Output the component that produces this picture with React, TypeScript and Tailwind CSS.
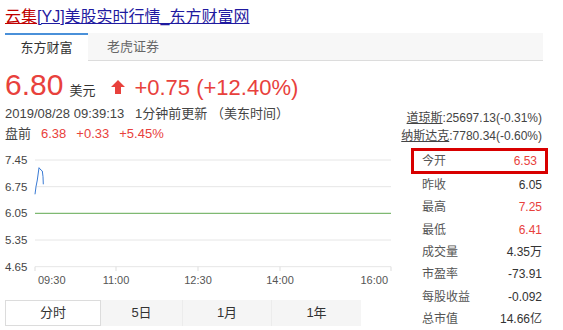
const red = "text-[#e8413c]";

const stats = [
  { label: "昨收", value: "6.05", up: false },
  { label: "最高", value: "7.25", up: true },
  { label: "最低", value: "6.41", up: true },
  { label: "成交量", value: "4.35万", up: false },
  { label: "市盈率", value: "-73.91", up: false },
  { label: "每股收益", value: "-0.092", up: false },
  { label: "总市值", value: "14.66亿", up: false },
];

const gridY = [10, 36.7, 63.3, 90, 116.7];
const yLabels = ["7.45", "6.75", "6.05", "5.35", "4.65"];
const times = [
  { t: "09:30", x: 38, anchor: "start" },
  { t: "11:00", x: 116, anchor: "middle" },
  { t: "12:30", x: 198, anchor: "middle" },
  { t: "14:00", x: 280, anchor: "middle" },
  { t: "16:00", x: 388, anchor: "end" },
];

const Chart = () => (
  <svg width="395" height="142" className="block" style={{ fontFamily: "'Liberation Sans', Arial, sans-serif" }}>
    {gridY.map((y, i) => (
      <g key={i}>
        <text x="5" y={y + 4} fontSize="11.5" fill="#444">
          {yLabels[i]}
        </text>
        {i !== 2 && <line x1="35" x2="391" y1={y} y2={y} stroke="#e6e6e6" strokeWidth="1" />}
      </g>
    ))}
    <line x1="35" x2="391" y1={63.3} y2={63.3} stroke="#5fa84f" strokeWidth="1" />
    {[35, 116, 198, 280, 391].map((x) => (
      <line key={x} x1={x} x2={x} y1={116.7} y2={121} stroke="#ddd" />
    ))}
    {times.map((t) => (
      <text key={t.t} x={t.x} y="134" fontSize="11" fill="#555" textAnchor={t.anchor as "start" | "middle" | "end"}>
        {t.t}
      </text>
    ))}
    <polyline
      points="35,44.3 36,36.7 37.3,30 39,17.7 40,19 41,20 42.3,21 43,26.7 43.3,34.3"
      fill="none"
      stroke="#3a7bd5"
      strokeWidth="1"
    />
  </svg>
);

export default function App() {
  return (
    <div
      className="w-[563px] h-[330px] bg-white overflow-hidden text-[#333]"
      style={{ fontFamily: "'Liberation Sans', Arial, 'Noto Sans CJK SC', sans-serif" }}
    >
      <div className="pl-[5px] pt-[7px] text-[16px] leading-[20px]">
        <a className="underline text-[#c00000]">云集</a>
        <a className="underline text-[#1f1aa0]">[YJ]美股实时行情_东方财富网</a>
      </div>

      {/* source tabs */}
      <div className="ml-[5px] mt-[6px] w-[538px] h-[28px] flex bg-[#f7f7f7] border-b border-[#dcdcdc] text-[13px]">
        <div className="w-[83px] h-[28px] bg-white border-t-2 border-[#4a90d9] flex items-center justify-center text-[#333]">
          东方财富
        </div>
        <div className="w-[90px] flex items-center justify-center text-[#666]">老虎证券</div>
      </div>

      {/* price */}
      <div className={`pl-[5px] mt-[7px] h-[34px] flex items-baseline ${red}`}>
        <span className="text-[30px] leading-[34px]">6.80</span>
        <span className="ml-[6px] text-[13px] text-[#333]">美元</span>
        <svg width="14" height="14" viewBox="0 0 14 14" className="ml-[16px] self-center mt-[3px]">
          <path d="M7 0 L14 7 L10 7 L10 14 L4 14 L4 7 L0 7 Z" fill="#e8413c" />
        </svg>
        <span className="ml-[9px] text-[22px]">+0.75 (+12.40%)</span>
      </div>

      <div className="flex">
        {/* left */}
        <div className="w-[400px]">
          <div className="pl-[5px] pt-[2px] text-[13px] leading-[20px] text-[#444]">
            2019/08/28 09:39:13&nbsp;&nbsp; 1分钟前更新 （美东时间）
          </div>
          <div className="pl-[5px] text-[13px] leading-[20px] flex gap-[10px]">
            <span className="text-[#444]">盘前</span>
            <span className={red}>6.38</span>
            <span className={red}>+0.33</span>
            <span className={red}>+5.45%</span>
          </div>
          <div className="mt-[6px]">
            <Chart />
          </div>
          <div className="ml-[5px] mt-[8px] w-[356px] h-[26px] flex bg-[#f5f5f5] text-[13px] text-[#333]">
            <div className="w-[96px] bg-white border border-[#dcdcdc] flex items-center justify-center">分时</div>
            <div className="w-[82px] border-r border-[#ececec] flex items-center justify-center">5日</div>
            <div className="w-[89px] border-r border-[#ececec] flex items-center justify-center">1月</div>
            <div className="flex-1 flex items-center justify-center">1年</div>
          </div>
        </div>

        {/* right */}
        <div className="w-[153px] pt-[7px] text-[12px]">
          <div className="pr-[11px] flex justify-end whitespace-nowrap leading-[18px] text-[#444]">
            <span>
              <span className="underline">道琼斯</span>:25697.13(-0.31%)
            </span>
          </div>
          <div className="pr-[11px] flex justify-end whitespace-nowrap leading-[18px] text-[#444]">
            <span>
              <span className="underline">纳斯达克</span>:7780.34(-0.60%)
            </span>
          </div>
          <div className="mt-[3px] ml-[11px] w-[137px] h-[26px] border-[3px] border-[#d80000] flex items-center justify-between pl-[8px] pr-[8px]">
            <span className="text-[#555]">今开</span>
            <span className={red}>6.53</span>
          </div>
          {stats.map((s) => (
            <div key={s.label} className="ml-[22px] pr-[11px] h-[22.3px] flex items-center justify-between">
              <span className="text-[#555]">{s.label}</span>
              <span className={s.up ? red : "text-[#333]"}>{s.value}</span>
            </div>
          ))}
        </div>
      </div>
    </div>
  );
}
